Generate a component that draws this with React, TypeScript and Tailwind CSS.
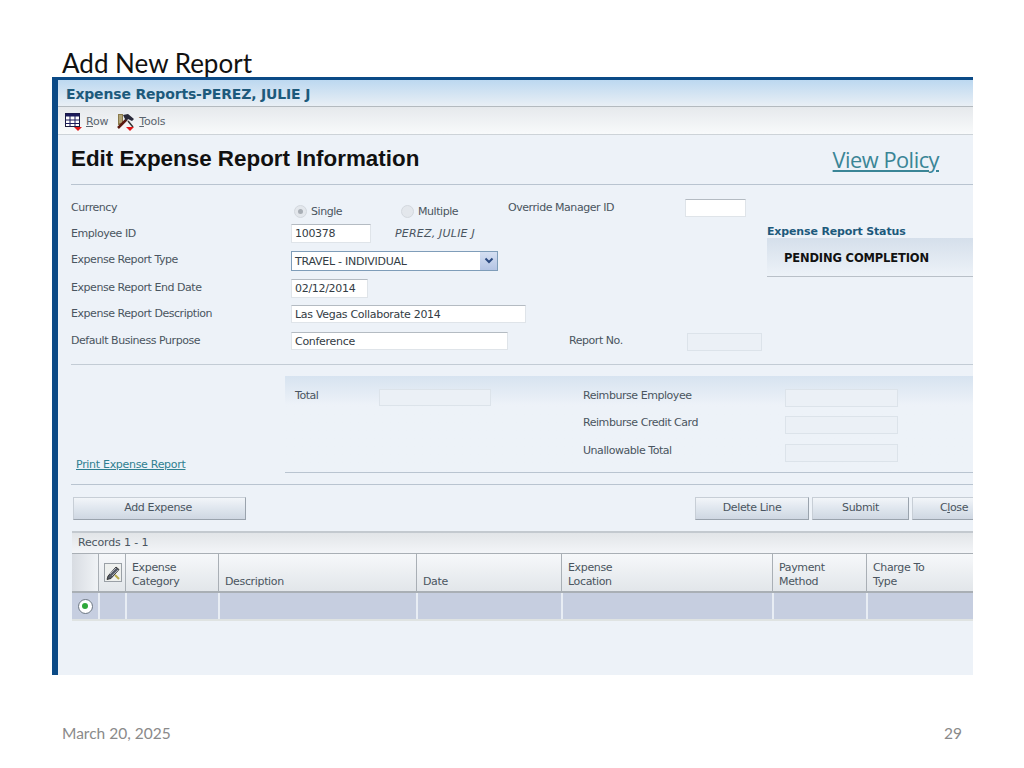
import React from "react";

const ui = "font-['DejaVu_Sans',sans-serif]";
const label = "text-[11px] tracking-[-0.45px] text-[#4a5560] leading-none whitespace-nowrap";
const input = "bg-white border border-[#dfe4e9] border-t-[#b4bbc2] text-[11px] tracking-[-0.3px] text-[#333c44] flex items-center px-[3px] leading-none whitespace-nowrap";
const ghost = "border border-[#dce3ea] bg-[#ebf0f6]";
const btn = "h-[23px] border border-[#9aa3ad] border-l-[#c7ced6] border-t-[#c7ced6] bg-gradient-to-b from-[#f2f5f9] via-[#dfe6ee] to-[#cfd7e2] text-[11px] tracking-[-0.35px] text-[#4a5560] flex items-center justify-center shrink-0";

function Row({ h = 26, mt = 0, children }: { h?: number; mt?: number; children: React.ReactNode }) {
  return (
    <div className="flex items-center" style={{ height: h, marginTop: mt }}>
      {children}
    </div>
  );
}

function GridIcon() {
  return (
    <svg width="18" height="18" viewBox="0 0 18 18">
      <rect x="0.5" y="0.5" width="14" height="13" fill="#fff" stroke="#1a1a3a" />
      <rect x="0.5" y="0.5" width="14" height="3" fill="#1a1a5a" />
      <path d="M0 7h15M0 10.500h15M5 0v14M10 0v14" stroke="#1a1a5a" fill="none" />
      <path d="M9 14h8l-4 4z" fill="#e01818" />
    </svg>
  );
}

function ToolsIcon() {
  return (
    <svg width="19" height="18" viewBox="0 0 19 18">
      <rect x="1" y="1" width="5" height="11" fill="#8b7a4a" />
      <path d="M2 3h3M2 5h3M2 7h3M2 9h3" stroke="#d8d0a8" />
      <path d="M1 15 L10 6" stroke="#5a1a10" strokeWidth="2.500" />
      <path d="M6 2l5-1 6 5-2 2-4-2-2 2z" fill="#2a2a3a" />
      <path d="M11 8l5 6" stroke="#333" strokeWidth="1.500" />
      <path d="M9 14h8l-4 4z" fill="#e01818" />
    </svg>
  );
}

function PencilIcon() {
  return (
    <svg width="18" height="19" viewBox="0 0 18 19">
      <rect x="0.500" y="0.500" width="17" height="18" fill="#eef0ee" stroke="#9aa0a6" />
      <path d="M4 13L12 4l3 2.500-8 9-4 1z" fill="#555b66" stroke="#222" strokeWidth="0.800" />
      <path d="M6 11l6-6M8 13l6-6" stroke="#c8ccd4" strokeWidth="0.800" />
      <path d="M11 12l4 4" stroke="#b8a848" strokeWidth="2" />
    </svg>
  );
}

function Radio({ text, on }: { text: string; on?: boolean }) {
  return (
    <div className="flex items-center gap-[4px] mt-[9px]">
      <span className="w-[13px] h-[13px] rounded-full bg-[#e3e7ec] border border-[#d3d8de] flex items-center justify-center">
        {on && <span className="w-[5px] h-[5px] rounded-full bg-[#a8aeb5]" />}
      </span>
      <span className={label}>{text}</span>
    </div>
  );
}

function Sum({ text, mt }: { text: string; mt: number }) {
  return (
    <div className="flex items-center h-[18px]" style={{ marginTop: mt }}>
      <span className={`${label} w-[202px] mb-[5px]`}>{text}</span>
      <span className={`${ghost} w-[113px] h-[18px]`} />
    </div>
  );
}

const heads: [string, string?][] = [
  ["Expense", "Category"],
  ["", "Description"],
  ["", "Date"],
  ["Expense", "Location"],
  ["Payment", "Method"],
  ["Charge To", "Type"],
];

export default function App() {
  return (
    <div className="relative w-[1024px] h-[768px] bg-white overflow-hidden flex flex-col font-['Lato',sans-serif]">
      <div className="h-[77px] pl-[62px] pt-[47px] text-[26px] leading-[32px] text-[#111]">Add New Report</div>

      <div className={`relative ml-[52px] w-[921px] h-[598px] shrink-0 border-t-[3px] border-l-[6px] border-[#0b4a86] bg-[#edf2f8] overflow-hidden flex flex-col ${ui}`}>
        <div className="absolute left-[-6px] top-[410px] w-[6px] h-[27px] bg-white flex items-center">
          <span className="w-0 h-0 border-y-[5px] border-y-transparent border-l-[5px] border-l-black" />
        </div>

        <div className="h-[27px] shrink-0 bg-gradient-to-b from-[#bcd8f0] to-[#e9eff5] border-b border-[#b4babf] pl-[8px] pt-[3px] flex items-center text-[14px] font-bold tracking-[-0.17px] text-[#1d5a7c]">
          Expense Reports-PEREZ, JULIE J
        </div>
        <div className="h-[28px] shrink-0 bg-gradient-to-b from-[#e6e9ec] to-[#f8fafb] border-b border-[#cdd3d8] pl-[7px] pt-[3px] flex items-center text-[11px] tracking-[-0.2px] text-[#5a646e]">
          <GridIcon />
          <span className="ml-[3px]"><u>R</u>ow</span>
          <span className="ml-[9px] flex"><ToolsIcon /></span>
          <span className="ml-[3px]"><u>T</u>ools</span>
        </div>

        <div className="ml-[13px] flex flex-col">
          <div className="h-[50px] flex items-center justify-between border-b border-[#b9c4d0] shrink-0">
            <h1 className="text-[22.400px] font-bold font-['Liberation_Sans',sans-serif] text-[#111] leading-none">Edit Expense Report Information</h1>
            <a className="mr-[34px] text-[21.800px] tracking-[-0.5px] text-[#3a8596] underline font-['Open_Sans',sans-serif] leading-none">View Policy</a>
          </div>

          <div className="flex border-b border-[#c3ccd5] h-[180px] shrink-0">
            <div className="w-[696px] pt-[9px] shrink-0">
              <Row>
                <span className={`${label} w-[220px]`}>Currency</span>
                <span className="ml-[3px] w-[107px]"><Radio text="Single" on /></span>
                <span className="w-[107px]"><Radio text="Multiple" /></span>
                <span className={`${label} w-[177px]`}>Override Manager ID</span>
                <span className={`${input} w-[61px] h-[18px] mt-[2px]`} />
              </Row>
              <Row>
                <span className={`${label} w-[220px]`}>Employee ID</span>
                <span className={`${input} w-[80px] h-[19px] mt-[1px]`}>100378</span>
                <span className="ml-[24px] italic text-[11px] tracking-[0.2px] text-[#4a5560] leading-none whitespace-nowrap">PEREZ, JULIE J</span>
              </Row>
              <Row>
                <span className={`${label} w-[220px]`}>Expense Report Type</span>
                <span className="w-[207px] h-[20px] mt-[4px] bg-white border border-[#7f9db9] flex items-center justify-between pl-[3px] text-[11px] tracking-[-0.25px] text-[#333c44]">
                  <span className="pt-[3px]">TRAVEL - INDIVIDUAL</span>
                  <span className="w-[17px] h-[18px] bg-gradient-to-b from-[#d5dff2] to-[#b4c4e4] flex items-center justify-center">
                    <svg width="10" height="8" viewBox="0 0 10 8"><path d="M1.500 1.500L5 5l3.500-3.500" stroke="#2c4a80" strokeWidth="2" fill="none" /></svg>
                  </span>
                </span>
              </Row>
              <Row mt={2}>
                <span className={`${label} w-[220px]`}>Expense Report End Date</span>
                <span className={`${input} w-[77px] h-[19px] mt-[2px]`}>02/12/2014</span>
              </Row>
              <Row>
                <span className={`${label} w-[220px]`}>Expense Report Description</span>
                <span className={`${input} w-[235px] h-[18px] mt-[2px]`}>Las Vegas Collaborate 2014</span>
              </Row>
              <Row mt={1}>
                <span className={`${label} w-[220px]`}>Default Business Purpose</span>
                <span className={`${input} w-[217px] h-[18px] mt-[2px]`}>Conference</span>
                <span className={`${label} ml-[61px] w-[118px]`}>Report No.</span>
                <span className={`${ghost} w-[75px] h-[18px] mt-[4px]`} />
              </Row>
            </div>
            <div className="flex-1 pt-[40px]">
              <div className="text-[11px] font-bold tracking-[-0.15px] text-[#1d5a7c] leading-[13px]">Expense Report Status</div>
              <div className="h-[39px] bg-gradient-to-b from-[#d5dfeb] to-[#edf2f8] border-b border-[#b9c0c8] pl-[17px] pt-[14px] text-[11.500px] font-bold tracking-[-0.15px] text-[#111] leading-[13px]">
                PENDING COMPLETION
              </div>
            </div>
          </div>

          <div className="flex mt-[11px] h-[97px] shrink-0">
            <div className="w-[214px] flex items-end pb-[1px] pl-[5px]">
              <a className="text-[11px] tracking-[-0.3px] text-[#2f7f90] underline leading-[14px]">Print Expense Report</a>
            </div>
            <div className="flex-1 border-b border-[#b9c4d0] bg-gradient-to-b from-[#d7e3f0] to-[#edf2f8] to-[30%] flex pt-[13px] pl-[10px]">
              <div className="w-[288px] flex items-start">
                <span className={`${label} w-[84px] mt-[1px]`}>Total</span>
                <span className={`${ghost} w-[112px] h-[17px]`} />
              </div>
              <div>
                <Sum text="Reimburse Employee" mt={0} />
                <Sum text="Reimburse Credit Card" mt={9} />
                <Sum text="Unallowable Total" mt={10} />
              </div>
            </div>
          </div>

          <div className="mt-[11px] border-t border-[#b9c4d0] pt-[12px] flex shrink-0 pl-[2px]">
            <button className={`${btn} w-[173px]`}><span className="mr-[3px]">Add Expense</span></button>
            <button className={`${btn} w-[114px] ml-[449px]`}>Delete Line</button>
            <button className={`${btn} w-[97px] ml-[3px]`}>Submit</button>
            <button className={`${btn} w-[78px] ml-[3px]`}><span className="ml-[6px]">C<u>l</u>ose</span></button>
          </div>

          <div className="mt-[11px] ml-[1px] w-[930px] border-t-2 border-[#c3c9cf] shrink-0">
            <div className="h-[21px] bg-gradient-to-b from-[#e2e5e8] to-[#f3f5f8] border-b border-[#a9afb5] pl-[6px] flex items-center text-[11px] text-[#4a5560] tracking-[-0.15px]">
              Records 1 - 1
            </div>
            <div className="grid grid-cols-[27px_27px_93px_198px_145px_211px_94px_116px] h-[39px] border-b-2 border-[#a9afb5] text-[11px] tracking-[-0.35px] text-[#4a5560] leading-[14px]">
              <div className="bg-gradient-to-r from-[#d8dce2] to-[#f0f3f6] border-r border-[#a9afb5]" />
              <div className="border-r border-[#a9afb5] bg-gradient-to-b from-[#f6f8fa] to-[#e2e6ea] flex items-center pl-[5px]"><PencilIcon /></div>
              {heads.map(([a, b], i) => (
                <div key={i} className="border-r border-[#a9afb5] bg-gradient-to-b from-[#f6f8fa] to-[#e2e6ea] pl-[6px] pb-[2px] flex flex-col justify-end">
                  {a && <span>{a}</span>}
                  <span>{b}</span>
                </div>
              ))}
            </div>
            <div className="grid grid-cols-[28px_27px_93px_198px_145px_211px_94px_116px] h-[28px] border-b-2 border-[#dfe3e2]">
              <div className="bg-[#c6cee0] border-r-2 border-[#e8edf4] flex items-center justify-center">
                <span className="w-[15px] h-[15px] rounded-full bg-white border border-[#6b7682] flex items-center justify-center">
                  <span className="w-[6px] h-[6px] rounded-full bg-[#2fa83a]" />
                </span>
              </div>
              {[0, 1, 2, 3, 4, 5, 6].map((i) => (
                <div key={i} className="bg-[#c6cee0] border-r-2 border-[#e8edf4]" />
              ))}
            </div>
          </div>
        </div>
      </div>

      <div className="w-[900px] ml-[62px] mt-[48px] flex justify-between text-[15.500px] leading-[20px] text-[#8a8a8a]">
        <span>March 20, 2025</span>
        <span>29</span>
      </div>
    </div>
  );
}
